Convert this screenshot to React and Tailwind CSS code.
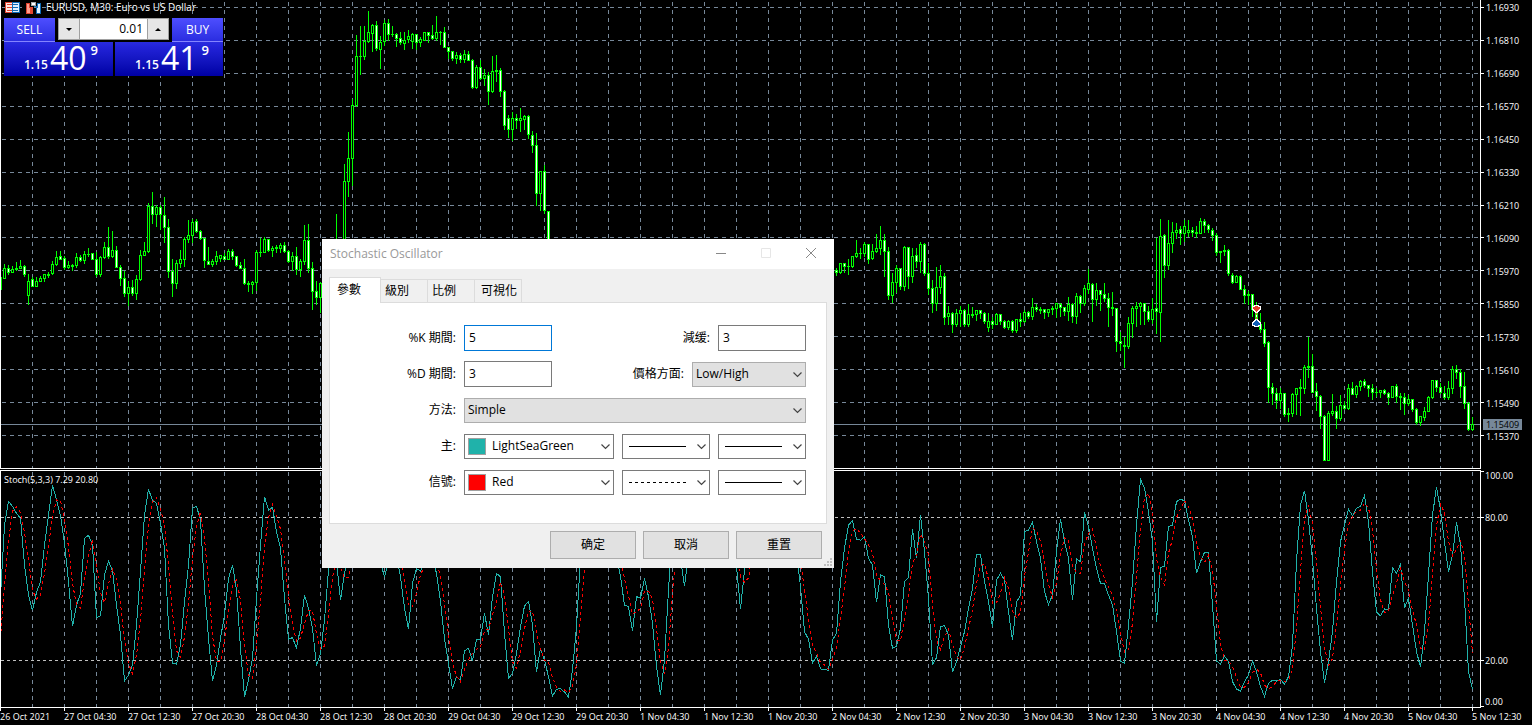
import { useState } from "react"

// Candle columns are 4px apart. Values are [high, low, top, bottom, bear] in
// thirds of a pixel, measured from the base row of each run.
const RUNS = [
    {
        start: 0, base: 180, rows: [
            [290, 330, 292, 328, 0], [252, 296, 265, 295, 0], [255, 285, 264, 278, 1], [258, 278, 267, 277, 0], [246, 272, 264, 268, 0],
            [240, 266, 258, 265, 0], [255, 290, 258, 284, 1], [282, 374, 303, 346, 0], [291, 320, 297, 319, 1], [291, 320, 303, 319, 0],
            [288, 306, 294, 304, 0], [282, 306, 283, 295, 0], [276, 294, 283, 285, 0], [243, 285, 252, 280, 0], [213, 257, 231, 253, 0],
            [213, 240, 228, 238, 1], [228, 270, 234, 262, 1], [243, 266, 256, 262, 0], [252, 272, 255, 259, 0], [219, 263, 231, 257, 0],
            [225, 246, 231, 242, 1], [213, 251, 222, 241, 0], [204, 232, 222, 224, 0], [219, 240, 221, 238, 1], [216, 290, 237, 283, 1],
            [228, 290, 231, 284, 0], [186, 236, 202, 232, 0], [142, 236, 202, 230, 1], [154, 234, 210, 230, 0], [198, 263, 210, 262, 1],
            [255, 318, 262, 295, 1], [273, 350, 295, 340, 1], [303, 378, 322, 340, 0], [300, 347, 321, 340, 1], [284, 360, 297, 341, 0],
            [210, 304, 226, 298, 0], [186, 228, 214, 226, 0], [70, 220, 79, 214, 0], [37, 132, 79, 103, 1], [76, 140, 82, 103, 0],
            [76, 150, 82, 103, 1], [51, 188, 106, 142, 1], [117, 294, 142, 274, 1], [237, 350, 274, 310, 1], [240, 327, 250, 310, 0],
            [210, 263, 238, 250, 0], [171, 262, 178, 238, 0], [121, 189, 166, 178, 0], [117, 189, 127, 166, 0], [118, 158, 124, 155, 1],
            [151, 180, 154, 176, 1], [174, 263, 175, 242, 1], [202, 254, 244, 253, 1], [237, 262, 244, 253, 0], [213, 255, 229, 244, 0],
            [225, 246, 226, 235, 0], [219, 240, 229, 238, 1], [207, 240, 214, 238, 0], [208, 240, 214, 230, 1], [228, 260, 229, 256, 1],
            [246, 266, 256, 264, 1], [237, 314, 265, 310, 1], [304, 335, 310, 314, 0], [304, 342, 307, 314, 0], [211, 332, 217, 307, 0],
            [174, 231, 217, 217, 0], [172, 220, 178, 217, 0], [177, 216, 178, 211, 1], [198, 231, 206, 212, 0], [195, 218, 202, 206, 0],
            [189, 218, 196, 205, 0], [187, 220, 196, 214, 1], [211, 250, 214, 244, 1], [216, 273, 229, 244, 0], [201, 285, 229, 268, 1],
            [238, 291, 244, 268, 0], [136, 255, 181, 244, 0], [132, 278, 181, 265, 1], [246, 390, 265, 334, 1], [303, 375, 334, 352, 1],
            [306, 400, 310, 352, 0],
        ],
    },
    { start: 84, base: 0, rows: [[642, 760, 730, 760, 0]] },
    {
        start: 86, base: 0, rows: [
            [492, 760, 544, 760, 0], [396, 590, 474, 544, 0], [297, 558, 316, 475, 0], [106, 320, 169, 317, 0], [79, 225, 169, 169, 0],
            [79, 180, 124, 170, 0], [33, 129, 97, 124, 0], [72, 155, 76, 100, 0], [64, 153, 76, 146, 1], [108, 207, 127, 149, 0],
            [60, 138, 70, 125, 0], [57, 122, 70, 103, 1], [79, 110, 103, 103, 0], [99, 140, 103, 115, 1], [96, 134, 115, 127, 1],
            [96, 150, 121, 131, 0], [90, 129, 109, 119, 0], [99, 147, 103, 124, 0], [102, 150, 103, 127, 1], [110, 140, 118, 127, 0],
            [96, 122, 97, 120, 0], [97, 129, 97, 107, 1], [75, 120, 106, 116, 1], [48, 124, 97, 116, 0], [94, 135, 97, 97, 0],
            [81, 143, 97, 142, 1], [141, 177, 142, 154, 1], [153, 183, 154, 176, 1], [156, 192, 166, 176, 0], [159, 190, 166, 178, 1],
            [150, 190, 163, 178, 0], [153, 183, 163, 181, 1], [177, 266, 181, 263, 1], [195, 267, 202, 263, 0], [180, 239, 202, 236, 1],
            [207, 258, 226, 236, 0], [216, 315, 226, 274, 1], [168, 279, 214, 275, 0], [165, 246, 211, 214, 0], [204, 290, 211, 275, 1],
            [270, 390, 274, 376, 1], [345, 413, 355, 388, 1], [336, 424, 355, 388, 0], [342, 386, 355, 361, 1], [324, 396, 355, 361, 0],
            [345, 390, 349, 358, 0], [345, 418, 349, 404, 1], [393, 459, 406, 436, 1], [399, 617, 436, 580, 1], [513, 633, 514, 580, 0],
            [495, 642, 514, 631, 1], [633, 760, 634, 760, 1],
        ],
    },
    {
        start: 209, base: 210, rows: [
            [174, 198, 181, 188, 1], [159, 191, 160, 188, 0], [159, 189, 160, 169, 1], [147, 194, 169, 170, 0], [138, 174, 139, 170, 0],
            [90, 143, 130, 139, 0], [114, 146, 130, 130, 0], [97, 140, 103, 131, 0], [102, 161, 103, 149, 1], [102, 150, 124, 146, 0],
            [72, 129, 115, 124, 0], [48, 135, 91, 115, 0], [72, 201, 91, 124, 1], [111, 270, 124, 257, 1], [189, 279, 217, 257, 0],
            [165, 249, 175, 217, 0], [174, 240, 175, 230, 1], [108, 242, 112, 230, 0], [111, 237, 112, 199, 1], [114, 219, 139, 199, 0],
            [114, 174, 136, 155, 1], [96, 189, 103, 155, 0], [99, 197, 103, 190, 1], [159, 255, 190, 235, 1], [210, 309, 235, 280, 1],
            [171, 303, 232, 280, 0], [165, 252, 199, 232, 0], [189, 345, 199, 322, 1], [288, 345, 310, 320, 0], [306, 369, 310, 343, 1],
            [297, 350, 310, 343, 0], [288, 350, 301, 310, 0], [297, 350, 301, 343, 1], [282, 350, 313, 343, 0], [291, 324, 313, 316, 0],
            [300, 333, 301, 314, 0], [300, 327, 301, 311, 1], [306, 341, 310, 334, 1], [309, 366, 334, 352, 0], [321, 357, 334, 343, 1],
            [309, 345, 313, 343, 0], [312, 345, 313, 334, 1], [330, 357, 334, 352, 1], [330, 360, 334, 352, 0], [330, 369, 334, 361, 1],
            [327, 369, 328, 361, 0], [309, 350, 328, 334, 1], [300, 339, 307, 334, 0], [303, 327, 307, 319, 1], [264, 330, 292, 319, 0],
            [282, 306, 292, 299, 1], [291, 312, 298, 300, 0], [297, 327, 299, 308, 1], [297, 320, 298, 307, 0], [288, 314, 295, 298, 0],
            [279, 323, 280, 295, 0], [279, 321, 283, 292, 1], [291, 318, 292, 304, 1], [261, 333, 283, 304, 0], [280, 339, 283, 319, 1],
            [249, 341, 259, 319, 0], [255, 309, 259, 280, 1], [225, 288, 235, 280, 0], [178, 252, 220, 238, 0], [219, 336, 223, 268, 1],
            [219, 288, 241, 268, 0], [240, 303, 241, 252, 1], [219, 276, 252, 265, 1], [249, 351, 265, 292, 1], [246, 318, 292, 295, 0],
            [294, 426, 295, 395, 1], [366, 424, 395, 401, 1], [381, 474, 406, 409, 0], [321, 417, 340, 409, 0], [289, 384, 295, 340, 0],
            [276, 351, 289, 295, 0], [276, 345, 280, 290, 0], [279, 345, 281, 304, 1], [288, 336, 304, 328, 1], [264, 342, 298, 328, 0],
            [84, 372, 295, 304, 1],
        ],
    },
    {
        start: 290, base: 200, rows: [
            [57, 426, 109, 338, 0], [102, 234, 106, 196, 1], [60, 210, 130, 196, 0], [66, 159, 97, 130, 0], [70, 118, 91, 97, 0],
            [78, 135, 88, 100, 1], [60, 126, 79, 100, 0], [60, 112, 91, 97, 0], [81, 111, 91, 97, 1], [78, 114, 97, 100, 0],
            [54, 102, 64, 100, 0], [57, 99, 64, 76, 1], [72, 99, 76, 88, 1], [85, 122, 91, 106, 1], [99, 168, 106, 157, 1],
            [153, 189, 154, 157, 0], [135, 168, 151, 154, 0], [147, 228, 151, 220, 1], [220, 251, 226, 247, 1], [225, 249, 229, 247, 0],
            [226, 270, 229, 268, 1], [255, 312, 268, 286, 1], [273, 316, 284, 287, 0], [282, 350, 284, 328, 1], [306, 366, 322, 360, 1],
            [340, 398, 372, 388, 1], [366, 441, 388, 430, 1], [423, 609, 427, 562, 1], [549, 615, 562, 580, 1], [564, 627, 580, 601, 1],
            [564, 627, 580, 601, 0], [579, 651, 580, 643, 1], [624, 666, 640, 643, 0], [579, 651, 583, 640, 0], [564, 645, 565, 583, 0],
            [537, 648, 562, 566, 0], [495, 582, 502, 566, 0], [411, 534, 499, 502, 0], [462, 580, 499, 577, 1], [549, 633, 574, 590, 1],
            [585, 687, 588, 649, 1], [645, 783, 650, 781, 1], [633, 783, 640, 781, 0], [582, 648, 634, 640, 0], [618, 687, 634, 656, 1],
            [585, 663, 616, 656, 0], [603, 630, 616, 625, 1], [552, 630, 565, 626, 0], [546, 585, 565, 583, 1], [555, 594, 559, 583, 0],
            [540, 572, 544, 559, 0], [537, 565, 544, 556, 1], [555, 591, 556, 566, 1], [552, 600, 565, 577, 1], [564, 591, 577, 577, 0],
            [570, 594, 571, 577, 0], [567, 585, 571, 580, 1], [576, 615, 580, 592, 1], [558, 595, 559, 592, 0], [552, 609, 559, 590, 1],
            [579, 630, 590, 593, 0], [579, 645, 593, 610, 1], [585, 618, 599, 610, 0], [597, 636, 599, 628, 1], [624, 675, 628, 667, 1],
            [648, 678, 650, 667, 0], [621, 663, 634, 652, 0], [588, 636, 592, 634, 0], [541, 597, 542, 592, 0], [540, 576, 542, 562, 1],
            [549, 582, 562, 578, 1], [558, 600, 580, 593, 1], [543, 600, 565, 593, 0], [498, 582, 508, 565, 0], [495, 537, 509, 516, 1],
            [507, 594, 517, 559, 1], [516, 627, 559, 610, 1], [606, 693, 610, 688, 1], [651, 693, 673, 688, 0],
        ],
    },
]

// %K, one value per bar, same units. The first two only seed the average.
const STOCH = [
    660, 505,
    395, 180, 109, 124, 145, 160, 300, 390, 436, 382, 350, 240, 150, 60, 105, 153, 234, 350, 484, 420,
    385, 220, 211, 240, 458, 452, 330, 288, 318, 420, 510, 648, 630, 600, 480, 320, 150, 73, 106, 115,
    175, 250, 480, 594, 598, 540, 410, 300, 130, 124, 165, 370, 520, 648, 600, 520, 450, 340, 300, 375,
    550, 696, 645, 580, 400, 240, 95, 135, 127, 200, 250, 400, 522, 518, 548, 490, 390, 430, 490, 603,
    565, 465, 315, 230, 290, 405, 325, 280, 200, 150, 120, 140, 180, 220, 250, 290, 337, 290, 250, 270,
    335, 430, 492, 355, 311, 318, 290, 250, 280, 325, 410, 520, 595, 671, 635, 645, 557, 550, 588, 523,
    523, 445, 510, 395, 325, 335, 505, 640, 625, 565, 485, 423, 409, 480, 622, 550, 585, 635, 693, 673,
    671, 681, 696, 615, 485, 275, 160, 110, 90, 110, 140, 170, 200, 230, 270, 335, 420, 425, 498, 395,
    399, 340, 395, 475, 605, 690, 585, 375, 190, 230, 280, 363, 270, 200, 150, 120, 110, 120, 140, 160,
    180, 200, 240, 270, 305, 433, 315, 270, 200, 150, 120, 110, 110, 120, 140, 160, 180, 200, 230, 260,
    365, 500, 523, 595, 573, 612, 613, 616, 525, 505, 350, 250, 180, 167, 222, 226, 215, 280, 300, 412,
    329, 336, 480, 550, 543, 490, 350, 338, 193, 280, 150, 260, 400, 598, 578, 485, 482, 510, 622, 590,
    545, 500, 430, 370, 268, 270, 350, 410, 485, 345, 325, 345, 440, 526, 412, 390, 200, 195, 172, 230,
    280, 380, 418, 390, 260, 163, 230, 280, 405, 281, 290, 142, 185, 250, 310, 355, 357, 390, 420, 500,
    588, 595, 480, 350, 180, 43, 70, 140, 230, 472, 308, 303, 185, 180, 110, 103, 107, 165, 215, 325,
    290, 262, 262, 420, 588, 598, 573, 590, 650, 672, 678, 650, 630, 588, 620, 665, 694, 655, 646, 648,
    643, 658, 635, 540, 290, 120, 77, 165, 285, 430, 560, 653, 590, 500, 350, 230, 180, 133, 152, 130,
    123, 91, 170, 320, 442, 452, 432, 433, 308, 325, 298, 428, 400, 480, 560, 607, 500, 330, 150, 66,
    135, 230, 320, 270, 172, 240, 400, 620, 673,
]

const GRID_Y = [7, 40, 73, 106, 139, 172, 205, 237, 270, 303, 336, 369, 402, 435]

const PRICES = [
    "1.16930", "1.16810", "1.16690", "1.16570", "1.16450", "1.16330", "1.16210",
    "1.16090", "1.15970", "1.15850", "1.15730", "1.15610", "1.15490", "1.15370",
]

const TIMES = [
    "26 Oct 2021", "27 Oct 04:30", "27 Oct 12:30", "27 Oct 20:30", "28 Oct 04:30", "28 Oct 12:30",
    "28 Oct 20:30", "29 Oct 04:30", "29 Oct 12:30", "29 Oct 20:30", "1 Nov 04:30", "1 Nov 12:30",
    "1 Nov 20:30", "2 Nov 04:30", "2 Nov 12:30", "2 Nov 20:30", "3 Nov 04:30", "3 Nov 12:30",
    "3 Nov 20:30", "4 Nov 04:30", "4 Nov 12:30", "4 Nov 20:30", "5 Nov 04:30", "5 Nov 12:30",
]

const COLUMNS = Array.from({ length: 46 }, (_, i) => (i + 1) * 32)

const toPoints = (values) => values.map((v, i) => `${i * 4 + 0.5},${(v / 3 - 5).toFixed(1)}`).join(" ")

const MAIN = STOCH.slice(2)
const SIGNAL = MAIN.map((v, i) => (STOCH[i] + STOCH[i + 1] + v) / 3)


const Candle = ({ index, base, row }) => {

    const [high, low, top, bottom, bear] = row
    const x = index * 4
    const y1 = base + Math.round(high / 3)
    const y2 = base + Math.round(low / 3)
    const t = base + Math.floor(top / 3)
    const b = base + Math.floor(bottom / 3)

    return (
        <g>
            <rect x={x} y={y1} width="1" height={y2 - y1} fill="#00ff00" />
            <rect x={x - 1} y={t} width="3" height={b - t + 1} fill="#00ff00" />
            {b - t > 1 && (
                <rect x={x} y={t + 1} width="1" height={b - t - 1} fill={bear ? "#ffffff" : "#000000"} />
            )}
        </g>
    )
}

const PriceChart = () => (
    <svg width="1485" height="469" className="block" shapeRendering="crispEdges" role="img" aria-label="EURUSD M30">
        {COLUMNS.map((x) => (
            <line key={x} x1={x + 0.5} x2={x + 0.5} y1="2" y2="468" stroke="#778899" strokeDasharray="4 4" />
        ))}
        {GRID_Y.map((y) => (
            <g key={y}>
                <line x1="2" x2="1480" y1={y + 0.5} y2={y + 0.5} stroke="#778899" strokeDasharray="4 4" />
                <line x1="1481" x2="1484" y1={y + 0.5} y2={y + 0.5} stroke="#ffffff" />
            </g>
        ))}
        <line x1="1" x2="1480" y1="424.5" y2="424.5" stroke="#778899" />

        {RUNS.map(({ start, base, rows }) => rows.map((row, i) => (
            <Candle key={start + i} index={start + i} base={base} row={row} />
        )))}

        <path d="M0.5 0V468.5H1480.5V0" fill="none" stroke="#ffffff" />

        <line x1="1256.5" x2="1256.5" y1="313" y2="319" stroke="#e8622c" strokeDasharray="2 2" />
        <g stroke="#ffffff" strokeWidth="2" paintOrder="stroke">
            <path d="M1255 306h3v1h2v2h-1v1h-1v1h-1v1h-1v-1h-1v-1h-1v-1h-1v-2h2z" fill="#e5432d" />
            <path d="M1255 326h3v-1h2v-2h-1v-1h-1v-1h-1v-1h-1v1h-1v1h-1v1h-1v2h2z" fill="#0f5fb4" />
        </g>
    </svg>
)

const StochChart = () => (
    <svg width="1485" height="242" className="block" shapeRendering="crispEdges" role="img" aria-label="Stochastic Oscillator">
        {COLUMNS.map((x) => (
            <line key={x} x1={x + 0.5} x2={x + 0.5} y1="2" y2="237" stroke="#778899" strokeDasharray="4 4" />
        ))}
        {[47, 190].map((y) => (
            <g key={y}>
                <line x1="1" x2="1480" y1={y + 0.5} y2={y + 0.5} stroke="#c0c0c0" strokeDasharray="3 3" />
                <line x1="1481" x2="1484" y1={y + 0.5} y2={y + 0.5} stroke="#ffffff" />
            </g>
        ))}
        <polyline points={toPoints(MAIN)} fill="none" stroke="#20b2aa" />
        <polyline points={toPoints(SIGNAL)} fill="none" stroke="#ff0000" strokeDasharray="3 3" />

        <path d="M0.5 237V0.5H1480.5V237.5H0M1481 1.5H1484M1481 236.5H1484" fill="none" stroke="#ffffff" />
        {TIMES.map((t, i) => (
            <line key={t} x1={i * 64 + 0.5} x2={i * 64 + 0.5} y1="238" y2="241" stroke="#ffffff" />
        ))}
    </svg>
)

const Quote = ({ side, price, pips, point, className }) => (
    <button type="button" className={`flex flex-col h-[58px] text-white bg-linear-to-b from-[#4e4eff] via-[#2222d8] to-[#0000a4] ${className}`}>
        <span className="w-[51px] border-b border-[#8484ff] text-center text-[12px] leading-[23px]">{side}</span>
        <span className="flex w-full items-start pl-5">
            <span className="mt-[16px] text-[12px] leading-[13px] font-semibold">{price}</span>
            <span className="ml-[2px] text-[32px] leading-[32px]">{pips}</span>
            <span className="ml-1 mt-[2px] text-[13px] leading-[13px] font-semibold">{point}</span>
        </span>
    </button>
)

const OneClick = () => {

    const [volume, setVolume] = useState("0.01")

    return (
        <div className="absolute left-1 top-[18px] w-[219px] bg-black">
            <div className="flex gap-[2px]">
                <Quote
                    side="SELL" price="1.15" pips="40" point="9"
                    className="w-[109px] [clip-path:polygon(0_0,51px_0,51px_24px,100%_24px,100%_100%,0_100%)]"
                />
                <Quote
                    side="BUY" price="1.15" pips="41" point="9"
                    className="w-[108px] items-end [clip-path:polygon(57px_0,100%_0,100%_100%,0_100%,0_24px,57px_24px)]"
                />
            </div>
            <div className="absolute left-[54px] top-0 flex w-[111px] h-[22px] border border-[#a0a0a0] bg-white">
                <button type="button" aria-label="Less" className="flex w-[21px] items-center justify-center bg-[#e6e6e6] border-r border-[#a0a0a0]">
                    <svg width="6" height="3" viewBox="0 0 6 3"><path d="M0 0h6L3 3z" /></svg>
                </button>
                <input
                    aria-label="Volume"
                    value={volume}
                    onChange={(e) => setVolume(e.target.value)}
                    className="min-w-0 flex-1 pr-1 text-right text-[12px] leading-[20px] text-black outline-none"
                />
                <button type="button" aria-label="More" className="flex w-[21px] items-center justify-center bg-[#e6e6e6] border-l border-[#a0a0a0]">
                    <svg width="6" height="3" viewBox="0 0 6 3"><path d="M0 3h6L3 0z" /></svg>
                </button>
            </div>
        </div>
    )
}

const Toolbar = () => (
    <div className="absolute left-[5px] top-0 flex items-center h-[14px] text-white text-[10px] leading-[14px] whitespace-nowrap">
        <svg width="15" height="12" viewBox="0 0 15 12" shapeRendering="crispEdges">
            <path d="M0 1h8v11H0z" fill="#e0442e" />
            <path d="M7 1h8v11H7z" fill="#0f6ab4" />
            <path d="M1 2h6v9H1z" fill="#ffe9e4" />
            <path d="M8 2h6v9H8z" fill="#dff0ff" />
            <path d="M2 3h5v1H2zM2 6h5v1H2zM2 9h5v1H2z" fill="#e0442e" />
            <path d="M8 3h5v1H8zM8 6h5v1H8zM8 9h5v1H8z" fill="#0f6ab4" />
        </svg>
        <svg width="15" height="13" viewBox="0 0 15 13" className="ml-[6px]" shapeRendering="crispEdges">
            <path d="M0 2h4v4h3v7H0z" fill="#e0442e" />
            <path d="M1 3h2v4h1v5H1z" fill="#ff9d8c" />
            <path d="M11 2h4v11h-5V6H8V5h3z" fill="#0f6ab4" />
            <path d="M12 3h2v9h-3V7h1z" fill="#dff0ff" />
            <path d="M5 1h5v4H5z" fill="#a8a8a8" />
            <path d="M6 2h3v2H6z" fill="#ffffff" />
        </svg>
        <span className="ml-[5px]">EURUSD, M30: Euro vs US Dollar</span>
    </div>
)

const Arrow = () => (
    <svg width="9" height="6" viewBox="0 0 9 6" className="pointer-events-none absolute right-1 top-[10px]">
        <path d="M0.5 0.5L4.5 4.5L8.5 0.5" fill="none" stroke="#444444" strokeWidth="1.2" />
    </svg>
)

const Select = ({ id, value, className }) => (
    <div className={`relative ${className}`}>
        <select id={id} className="block w-full h-[25px] pl-[3px] border border-[#adadad] bg-[#e1e1e1] appearance-none outline-none">
            <option>{value}</option>
        </select>
        <Arrow />
    </div>
)

const ColorSelect = ({ id, value, swatch }) => (
    <div className="relative flex-1">
        <select id={id} className="block w-full h-[25px] pl-[27px] border border-[#7a7a7a] bg-white appearance-none outline-none">
            <option>{value}</option>
        </select>
        <span className={`pointer-events-none absolute left-1 top-1 w-[18px] h-[17px] border border-[#a0a0a0] ${swatch}`} />
        <Arrow />
    </div>
)

const LineSelect = ({ name, dashed }) => (
    <div className="relative w-[88px]">
        <select aria-label={name} className="block w-full h-[25px] border border-[#7a7a7a] bg-white appearance-none outline-none">
            <option value={dashed ? "dash" : "solid"}></option>
        </select>
        <svg width="57" height="1" className="pointer-events-none absolute left-[7px] top-3" shapeRendering="crispEdges">
            <line x1="0" x2="57" y1="0.5" y2="0.5" stroke="#000000" strokeDasharray={dashed ? "3 3" : undefined} />
        </svg>
        <Arrow />
    </div>
)

const Row = ({ id, label, children }) => (
    <div className="flex h-[26px] items-center gap-2">
        <label htmlFor={id} className="w-[126px] text-right">{label}</label>
        <div className="flex flex-1 items-center gap-2">{children}</div>
    </div>
)

const TABS = ["級別", "比例", "可視化"]

const Dialog = () => {

    const [form, setForm] = useState({ k: "5", d: "3", slowing: "3" })

    const change = (key) => (e) => setForm({ ...form, [key]: e.target.value })

    return (
        <div role="dialog" aria-label="Stochastic Oscillator" className="absolute left-[322px] top-[239px] w-[512px] bg-[#f0f0f0] text-black text-[12px] leading-[16px] font-['Open_Sans','Noto_Sans_CJK_TC',sans-serif]">

            <div className="flex h-[30px] items-center bg-white pl-2 text-[#999999]">
                <h1>Stochastic Oscillator</h1>
                <div className="ml-auto flex h-[28px] self-start">
                    <button type="button" aria-label="Minimize" className="flex w-[45px] items-center justify-center">
                        <svg width="10" height="10" viewBox="0 0 10 10"><path d="M0 5.5h10" stroke="#888888" /></svg>
                    </button>
                    <button type="button" aria-label="Maximize" className="flex w-[45px] items-center justify-center">
                        <svg width="10" height="10" viewBox="0 0 10 10"><path d="M0.5 0.5h9v9h-9z" fill="none" stroke="#e6e6e6" /></svg>
                    </button>
                    <button type="button" aria-label="Close" className="flex w-[46px] items-center justify-center">
                        <svg width="10" height="10" viewBox="0 0 10 10"><path d="M0 0L10 10M10 0L0 10" stroke="#888888" /></svg>
                    </button>
                </div>
            </div>

            <div className="px-[7px] pt-2">
                <div role="tablist" className="flex items-end">
                    <button type="button" role="tab" aria-selected="true" className="relative z-10 -mb-px w-[52px] h-[26px] pl-[7px] pb-[2px] text-left bg-white border border-b-0 border-[#dcdcdc]">
                        參數
                    </button>
                    {TABS.map((tab) => (
                        <button type="button" role="tab" key={tab} className="min-w-[47px] h-[23px] pl-1 pr-[3px] text-left border border-l-0 border-b-0 border-[#dcdcdc] last:pl-[6px]">
                            {tab}
                        </button>
                    ))}
                </div>

                <div className="flex h-[222px] flex-col gap-[10px] bg-white border border-[#dcdcdc] pt-[22px] pr-5">
                    <Row id="k" label="%K 期間:">
                        <input id="k" value={form.k} onChange={change("k")} className="w-[88px] h-[26px] pl-1 pb-[2px] border border-[#0078d7] outline-none" />
                        <label htmlFor="slowing" className="ml-auto">減缓:</label>
                        <input id="slowing" value={form.slowing} onChange={change("slowing")} className="w-[88px] h-[26px] pl-1 pb-[2px] border border-[#7a7a7a] outline-none" />
                    </Row>
                    <Row id="d" label="%D 期間:">
                        <input id="d" value={form.d} onChange={change("d")} className="w-[88px] h-[26px] pl-1 pb-[2px] border border-[#7a7a7a] outline-none" />
                        <label htmlFor="price" className="ml-auto">價格方面:</label>
                        <Select id="price" value="Low/High" className="w-[114px]" />
                    </Row>
                    <Row id="method" label="方法:">
                        <Select id="method" value="Simple" className="flex-1" />
                    </Row>
                    <Row id="main" label="主:">
                        <ColorSelect id="main" value="LightSeaGreen" swatch="bg-[#20b2aa]" />
                        <LineSelect name="Main style" />
                        <LineSelect name="Main width" />
                    </Row>
                    <Row id="signal" label="信號:">
                        <ColorSelect id="signal" value="Red" swatch="bg-[#ff0000]" />
                        <LineSelect name="Signal style" dashed />
                        <LineSelect name="Signal width" />
                    </Row>
                </div>
            </div>

            <div className="flex justify-end gap-[7px] pt-[7px] pb-[9px] pr-3">
                {["确定", "取消", "重置"].map((text) => (
                    <button type="button" key={text} className="w-[86px] h-[28px] bg-[#e1e1e1] border border-[#adadad]">{text}</button>
                ))}
            </div>

            <svg width="8" height="8" viewBox="0 0 8 8" className="absolute bottom-[2px] right-[2px]" fill="#bfbfbf">
                <path d="M6 0h2v2H6zM3 3h2v2H3zM6 3h2v2H6zM0 6h2v2H0zM3 6h2v2H3zM6 6h2v2H6z" />
            </svg>
        </div>
    )
}

export default function App() {
    return (
        <main className="relative flex min-h-screen flex-col overflow-hidden bg-black text-white text-[9px] leading-[15px] font-['Open_Sans',sans-serif]">

            <section className="relative flex">
                <div className="min-w-0 flex-1 overflow-hidden">
                    <PriceChart />
                </div>
                <div className="relative flex w-[47px] flex-col gap-[18px] pl-px">
                    {PRICES.map((p) => <span key={p}>{p}</span>)}
                    <span className="absolute -left-[2px] top-[419px] w-[39px] h-[11px] bg-[#778899] pl-[3px] leading-[11px] text-black">1.15409</span>
                </div>
                <Toolbar />
                <OneClick />
            </section>

            <section className="relative mt-px flex">
                <div className="min-w-0 flex-1 overflow-hidden">
                    <StochChart />
                </div>
                <div className="flex w-[47px] flex-col">
                    <span className="leading-[11px]">100.00</span>
                    <span className="mt-[29px]">80.00</span>
                    <span className="mt-[128px]">20.00</span>
                    <span className="mt-[26px]">0.00</span>
                </div>
                <p className="absolute left-1 top-[2px]">Stoch(5,3,3) 7.29 20.80</p>
            </section>

            <div className="flex -mt-[3px]">
                {TIMES.map((t) => <span key={t} className="w-[64px] shrink-0 whitespace-nowrap">{t}</span>)}
            </div>

            <Dialog />
        </main>
    )
}
